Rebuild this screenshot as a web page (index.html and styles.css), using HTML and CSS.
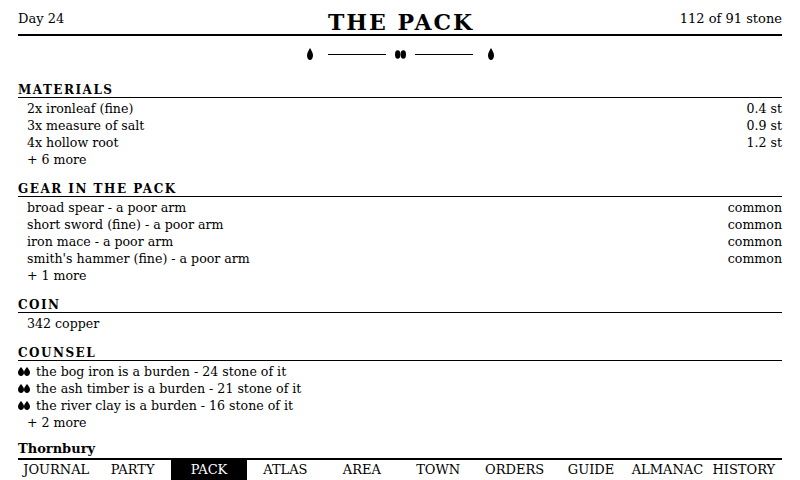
FILE: index.html
```html
<!DOCTYPE html>
<html lang="en">
<head>
<meta charset="utf-8">
<title>The Pack</title>
<link rel="stylesheet" href="styles.css">
</head>
<body>
<div class="page">
  <header class="top">
    <span class="day">Day 24</span>
    <h1 class="title">THE PACK</h1>
    <span class="load">112 of 91 stone</span>
  </header>

  <div class="ornament">
    <svg class="drop" width="6" height="12" viewBox="0 0 6 12"><path d="M3 0C4 2 6 4.5 6 7.5C6 10 4.6 12 3 12C1.4 12 0 10 0 7.5C0 4.5 2 2 3 0Z"/></svg>
    <span class="orn-line"></span>
    <svg class="pair" width="11" height="9" viewBox="0 0 11 9"><ellipse cx="2.7" cy="4.5" rx="2.7" ry="4.2"/><ellipse cx="8.3" cy="4.5" rx="2.7" ry="4.2"/></svg>
    <span class="orn-line"></span>
    <svg class="drop" width="6" height="12" viewBox="0 0 6 12"><path d="M3 0C4 2 6 4.5 6 7.5C6 10 4.6 12 3 12C1.4 12 0 10 0 7.5C0 4.5 2 2 3 0Z"/></svg>
  </div>

  <main class="content">
    <section class="sec">
      <h2 class="sec-head">MATERIALS</h2>
      <ul class="rows">
        <li class="row"><span>2x ironleaf (fine)</span><span>0.4 st</span></li>
        <li class="row"><span>3x measure of salt</span><span>0.9 st</span></li>
        <li class="row"><span>4x hollow root</span><span>1.2 st</span></li>
        <li class="row"><span>+ 6 more</span></li>
      </ul>
    </section>

    <section class="sec">
      <h2 class="sec-head">GEAR IN THE PACK</h2>
      <ul class="rows">
        <li class="row"><span>broad spear - a poor arm</span><span>common</span></li>
        <li class="row"><span>short sword (fine) - a poor arm</span><span>common</span></li>
        <li class="row"><span>iron mace - a poor arm</span><span>common</span></li>
        <li class="row"><span>smith's hammer (fine) - a poor arm</span><span>common</span></li>
        <li class="row"><span>+ 1 more</span></li>
      </ul>
    </section>

    <section class="sec">
      <h2 class="sec-head">COIN</h2>
      <ul class="rows">
        <li class="row"><span>342 copper</span></li>
      </ul>
    </section>

    <section class="sec">
      <h2 class="sec-head">COUNSEL</h2>
      <ul class="rows">
        <li class="row counsel"><svg class="bullet" width="12" height="9" viewBox="0 0 12 9"><path d="M3 0C4.3 1.8 6 3.4 6 5.6C6 7.6 4.6 9 3 9C1.4 9 0 7.6 0 5.6C0 3.4 1.7 1.8 3 0Z"/><path d="M9 0C10.3 1.8 12 3.4 12 5.6C12 7.6 10.6 9 9 9C7.4 9 6 7.6 6 5.6C6 3.4 7.7 1.8 9 0Z"/></svg><span>the bog iron is a burden - 24 stone of it</span></li>
        <li class="row counsel"><svg class="bullet" width="12" height="9" viewBox="0 0 12 9"><path d="M3 0C4.3 1.8 6 3.4 6 5.6C6 7.6 4.6 9 3 9C1.4 9 0 7.6 0 5.6C0 3.4 1.7 1.8 3 0Z"/><path d="M9 0C10.3 1.8 12 3.4 12 5.6C12 7.6 10.6 9 9 9C7.4 9 6 7.6 6 5.6C6 3.4 7.7 1.8 9 0Z"/></svg><span>the ash timber is a burden - 21 stone of it</span></li>
        <li class="row counsel"><svg class="bullet" width="12" height="9" viewBox="0 0 12 9"><path d="M3 0C4.3 1.8 6 3.4 6 5.6C6 7.6 4.6 9 3 9C1.4 9 0 7.6 0 5.6C0 3.4 1.7 1.8 3 0Z"/><path d="M9 0C10.3 1.8 12 3.4 12 5.6C12 7.6 10.6 9 9 9C7.4 9 6 7.6 6 5.6C6 3.4 7.7 1.8 9 0Z"/></svg><span>the river clay is a burden - 16 stone of it</span></li>
        <li class="row"><span>+ 2 more</span></li>
      </ul>
    </section>
  </main>

  <div class="place">Thornbury</div>

  <nav class="tabs">
    <span class="tab">JOURNAL</span>
    <span class="tab">PARTY</span>
    <span class="tab active">PACK</span>
    <span class="tab">ATLAS</span>
    <span class="tab">AREA</span>
    <span class="tab">TOWN</span>
    <span class="tab">ORDERS</span>
    <span class="tab">GUIDE</span>
    <span class="tab">ALMANAC</span>
    <span class="tab">HISTORY</span>
  </nav>
</div>
</body>
</html>
```

FILE: styles.css
```css
html, body {
  margin: 0;
  padding: 0;
  background: #fff;
  color: #000;
}

body {
  font-family: "DejaVu Serif", serif;
  font-size: 13px;
}

.page {
  height: 480px;
  box-sizing: border-box;
  padding: 0 18px;
  display: flex;
  flex-direction: column;
  overflow: hidden;
}

/* header */
.top {
  display: grid;
  grid-template-columns: 1fr auto 1fr;
  align-items: start;
  height: 34px;
  border-bottom: 2px solid #000;
}

.day {
  padding-top: 11px;
  line-height: 16px;
}

.load {
  padding-top: 11px;
  line-height: 16px;
  text-align: right;
}

.title {
  margin: 0 -2px 0 0;
  padding-top: 9px;
  font-size: 22px;
  line-height: 26px;
  font-weight: bold;
  letter-spacing: 2px;
}

/* ornament */
.ornament {
  margin-top: 12px;
  height: 12px;
  display: flex;
  align-items: center;
  justify-content: center;
}

.ornament svg {
  display: block;
  fill: #000;
}

.orn-line {
  width: 58px;
  height: 1px;
  background: #000;
  margin: 0 9px 0 15px;
}

.orn-line + .pair + .orn-line {
  margin: 0 15px 0 9px;
}

/* content */
.content {
  flex: 1;
  padding-top: 23px;
}

.sec + .sec {
  margin-top: 14px;
}

.sec-head {
  margin: 0;
  font-size: 12px;
  font-weight: bold;
  letter-spacing: 1.5px;
  line-height: 13px;
  padding-top: 1px;
  border-bottom: 1px solid #000;
  margin-bottom: -1px;
}

.rows {
  list-style: none;
  margin: 0;
  padding: 3px 0 0 0;
  font-size: 12.6px;
}

.row {
  display: flex;
  justify-content: space-between;
  align-items: center;
  height: 17px;
  line-height: 17px;
  padding-left: 9px;
}

.row.counsel {
  justify-content: flex-start;
  padding-left: 0;
}

.bullet {
  display: block;
  fill: #000;
  margin: 0 6px 0 0;
}

/* location */
.place {
  font-weight: bold;
  line-height: 17px;
  padding-bottom: 1px;
}

/* tabs */
.tabs {
  display: grid;
  grid-template-columns: repeat(10, 1fr);
  border-top: 2px solid #000;
}

.tab {
  text-align: center;
  line-height: 20px;
  white-space: nowrap;
}

.tab.active {
  background: #000;
  color: #fff;
}
```
